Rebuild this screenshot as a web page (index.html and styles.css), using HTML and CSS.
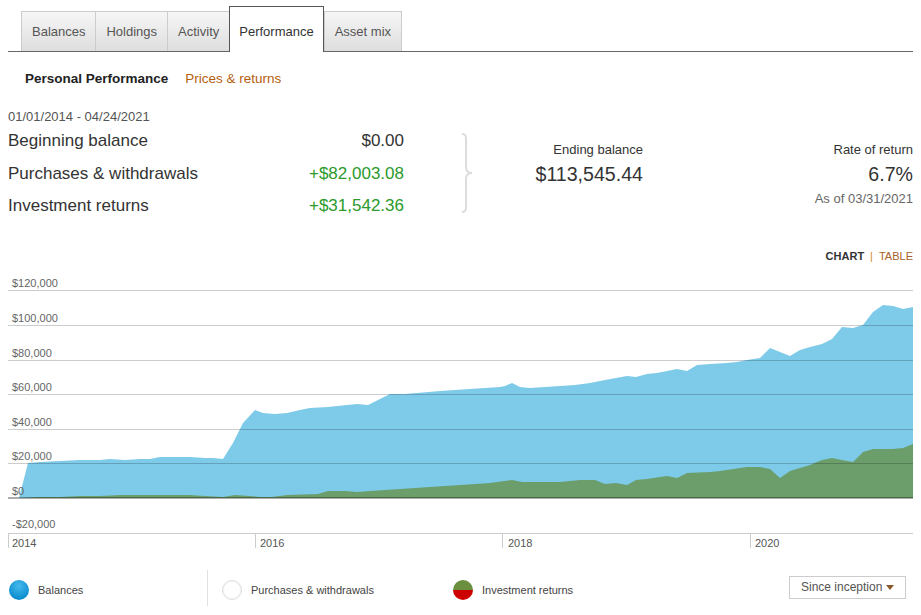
FILE: index.html
```html
<!DOCTYPE html>
<html lang="en">
<head>
<meta charset="utf-8">
<title>Performance</title>
<link rel="stylesheet" href="styles.css">
</head>
<body>
<div class="page">
  <nav class="tabs">
    <div class="tab">Balances</div>
    <div class="tab">Holdings</div>
    <div class="tab">Activity</div>
    <div class="tab tab-active">Performance</div>
    <div class="tab">Asset mix</div>
  </nav>

  <div class="subnav">
    <span class="sub-active">Personal Performance</span>
    <span class="sub-link">Prices &amp; returns</span>
  </div>

  <section class="summary">
    <div class="summary-left">
      <div class="daterange">01/01/2014 - 04/24/2021</div>
      <div class="row"><span>Beginning balance</span><span>$0.00</span></div>
      <div class="row"><span>Purchases &amp; withdrawals</span><span class="pos">+$82,003.08</span></div>
      <div class="row"><span>Investment returns</span><span class="pos">+$31,542.36</span></div>
    </div>
    <div class="brace">
      <svg width="16" height="80" viewBox="0 0 16 80">
        <path d="M2 1 Q6 1 6 5 L6 34 Q6 40 12 40 Q6 40 6 46 L6 75 Q6 79 2 79" fill="none" stroke="#dddddd" stroke-width="2"/>
      </svg>
    </div>
    <div class="ending">
      <div class="stat-label">Ending balance</div>
      <div class="stat-value">$113,545.44</div>
    </div>
    <div class="rate">
      <div class="stat-label">Rate of return</div>
      <div class="stat-value">6.7%</div>
      <div class="stat-note">As of 03/31/2021</div>
    </div>
  </section>

  <div class="chart-toggle">
    <span class="toggle-active">CHART</span>
    <span class="toggle-sep">|</span>
    <span class="toggle-link">TABLE</span>
  </div>

  <svg class="chart" width="905" height="280" viewBox="8 270 905 280">
    <polygon class="area-balance" points="19,498 28,463 40,462 60,461 80,460 100,460 110,459 125,460 140,459 150,459 160,457 175,457 190,457 205,458 213,458 223,459 233,443 243,423 255,410 263,413 275,414 287,413 300,410 310,408 328,407 347,405 357,404 368,405 378,400 390,394 405,394 440,391 470,389 500,387 505,386 512,383 520,387 530,388 545,387 560,386 575,385 590,383 600,381 605,380 616,378 627,376 636,377 647,374 657,373 667,371 677,369 687,371 697,365 710,364 727,363 737,362 747,360 760,358 770,348 780,352 790,356 800,350 810,347 822,344 832,339 842,327 853,328 863,325 873,312 883,305 893,306 903,309 913,307 913,498"/>
    <polygon class="area-returns" points="19,498 40,497 60,497 80,496 100,496 120,495 150,495 170,495 190,495 205,496 223,497 235,495 250,496 260,497 272,497 287,495 318,494 328,491 345,491 357,492 370,491 400,489 430,487 460,485 490,483 512,480 522,482 560,482 580,480 595,480 600,482 605,484 616,483 627,485 636,480 647,479 667,476 677,478 687,473 710,472 720,471 747,467 760,467 770,469 780,478 790,471 800,468 810,465 822,460 832,458 842,460 853,462 863,452 873,449 893,449 903,448 913,444 913,498"/>
    <g class="grid">
      <line x1="8" y1="290.5" x2="913" y2="290.5"/>
      <line x1="8" y1="325.5" x2="913" y2="325.5"/>
      <line x1="8" y1="360.5" x2="913" y2="360.5"/>
      <line x1="8" y1="394.5" x2="913" y2="394.5"/>
      <line x1="8" y1="429.5" x2="913" y2="429.5"/>
      <line x1="8" y1="463.5" x2="913" y2="463.5"/>
    </g>
    <line class="zero" x1="8" y1="498" x2="913" y2="498"/>
    <g class="axis">
      <line x1="8" y1="533.5" x2="913" y2="533.5"/>
      <line x1="8.5" y1="533" x2="8.5" y2="548"/>
      <line x1="255.5" y1="533" x2="255.5" y2="548"/>
      <line x1="502.5" y1="533" x2="502.5" y2="548"/>
      <line x1="750.5" y1="533" x2="750.5" y2="548"/>
    </g>
    <g class="ylabels">
      <text x="12" y="287">$120,000</text>
      <text x="12" y="322">$100,000</text>
      <text x="12" y="357">$80,000</text>
      <text x="12" y="391">$60,000</text>
      <text x="12" y="426">$40,000</text>
      <text x="12" y="460">$20,000</text>
      <text x="12" y="495">$0</text>
      <text x="12" y="528">-$20,000</text>
    </g>
    <g class="xlabels">
      <text x="12" y="547">2014</text>
      <text x="260" y="547">2016</text>
      <text x="508" y="547">2018</text>
      <text x="755" y="547">2020</text>
    </g>
  </svg>

  <div class="legend">
    <div class="legend-item legend-first">
      <span class="dot dot-blue"></span><span>Balances</span>
    </div>
    <div class="legend-sep"></div>
    <div class="legend-item legend-second">
      <span class="dot dot-empty"></span><span>Purchases &amp; withdrawals</span>
    </div>
    <div class="legend-item">
      <span class="dot dot-split"></span><span>Investment returns</span>
    </div>
    <div class="dropdown">
      <span>Since inception</span>
      <span class="caret"></span>
    </div>
  </div>
</div>
</body>
</html>
```

FILE: styles.css
```css
* { box-sizing: border-box; }

html, body {
  margin: 0;
  padding: 0;
  background: #ffffff;
}

body {
  font-family: "Liberation Sans", Arial, sans-serif;
  color: #333333;
}

.page {
  padding: 0 8px;
  width: 921px;
}

/* Tabs */
.tabs {
  display: flex;
  align-items: flex-end;
  padding: 6px 0 0 13px;
  border-bottom: 1px solid #666666;
}

.tab {
  height: 40px;
  padding: 0 10px 1px;
  display: flex;
  align-items: center;
  justify-content: center;
  font-size: 13px;
  color: #555555;
  border: 1px solid #cccccc;
  border-bottom: none;
  background: linear-gradient(#f6f6f6, #dedede);
  margin-right: -1px;
}

.tab-active {
  height: 46px;
  margin-bottom: -1px;
  padding: 4px 9px 0;
  background: #ffffff;
  border-color: #555555;
  color: #333333;
  position: relative;
  z-index: 1;
  margin-right: 0;
}

/* Sub navigation */
.subnav {
  margin-top: 19px;
  padding-left: 17px;
  font-size: 13.5px;
  line-height: 16px;
  display: flex;
  gap: 17px;
}

.sub-active {
  font-weight: bold;
  color: #222222;
}

.sub-link {
  color: #b5600f;
}

/* Summary */
.summary {
  margin-top: 22px;
  display: flex;
  align-items: flex-start;
}

.summary-left {
  width: 396px;
}

.daterange {
  font-size: 13px;
  line-height: 16px;
  color: #555555;
}

.row {
  height: 32.5px;
  display: flex;
  align-items: center;
  justify-content: space-between;
  font-size: 17px;
  color: #333333;
}

.row:first-of-type {
  margin-top: 1px;
}

.pos {
  color: #2c9a2c;
}

.brace {
  margin-left: 56px;
  margin-top: 24px;
  width: 16px;
  height: 80px;
}

.brace svg {
  display: block;
}

.ending {
  width: 167px;
  text-align: right;
}

.rate {
  flex: 1;
  text-align: right;
}

.stat-label {
  margin-top: 33px;
  font-size: 13px;
  line-height: 16px;
  color: #333333;
}

.stat-value {
  margin-top: 4px;
  font-size: 19.6px;
  line-height: 24px;
  color: #333333;
}

.stat-note {
  margin-top: 5px;
  font-size: 13px;
  line-height: 16px;
  color: #666666;
}

/* Chart toggle */
.chart-toggle {
  margin-top: 26px;
  display: flex;
  justify-content: flex-end;
  gap: 6px;
  font-size: 11px;
  line-height: 14px;
}

.toggle-active {
  font-weight: bold;
  color: #333333;
}

.toggle-sep {
  color: #d08a2c;
}

.toggle-link {
  color: #a8612a;
}

/* Chart */
.chart {
  display: block;
  margin-top: 7px;
}

.area-balance {
  fill: #7ecae9;
}

.area-returns {
  fill: #6c9e6c;
}

.grid line {
  stroke: rgba(0, 0, 0, 0.2);
  stroke-width: 1;
}

.zero {
  stroke: rgba(0, 0, 0, 0.32);
  stroke-width: 2;
}

.axis line {
  stroke: #cccccc;
  stroke-width: 1;
}

.ylabels text {
  font-family: "Liberation Sans", Arial, sans-serif;
  font-size: 11px;
  fill: #666666;
}

.xlabels text {
  font-family: "Liberation Sans", Arial, sans-serif;
  font-size: 11px;
  fill: #555555;
}

/* Legend */
.legend {
  margin-top: 20px;
  height: 36px;
  display: flex;
  align-items: center;
  font-size: 11px;
  color: #444444;
}

.legend-item {
  display: flex;
  align-items: center;
  gap: 9px;
  padding-top: 4px;
}

.legend-first {
  width: 199px;
  padding-left: 1px;
}

.legend-sep {
  width: 1px;
  align-self: stretch;
  background: #e2e2e2;
}

.legend-second {
  width: 245px;
  padding-left: 14px;
}

.dot {
  width: 20px;
  height: 20px;
  border-radius: 50%;
  display: inline-block;
}

.dot-blue {
  background: radial-gradient(circle at 50% 30%, #46b9ec, #0a8ccf 75%);
}

.dot-empty {
  background: #ffffff;
  border: 1px solid #dddddd;
  box-shadow: inset 0 0 2px rgba(0, 0, 0, 0.12);
}

.dot-split {
  background: linear-gradient(#6a8f3f 50%, #cc0000 50%);
}

.dropdown {
  margin-left: auto;
  margin-right: 7px;
  align-self: flex-start;
  margin-top: 6px;
  width: 117px;
  height: 23px;
  border: 1px solid #cccccc;
  display: flex;
  align-items: center;
  justify-content: space-between;
  padding: 0 11px 0 11px;
  font-size: 12px;
  color: #555555;
}

.caret {
  width: 0;
  height: 0;
  border-left: 4px solid transparent;
  border-right: 4px solid transparent;
  border-top: 5px solid #8b5a2b;
}
```
